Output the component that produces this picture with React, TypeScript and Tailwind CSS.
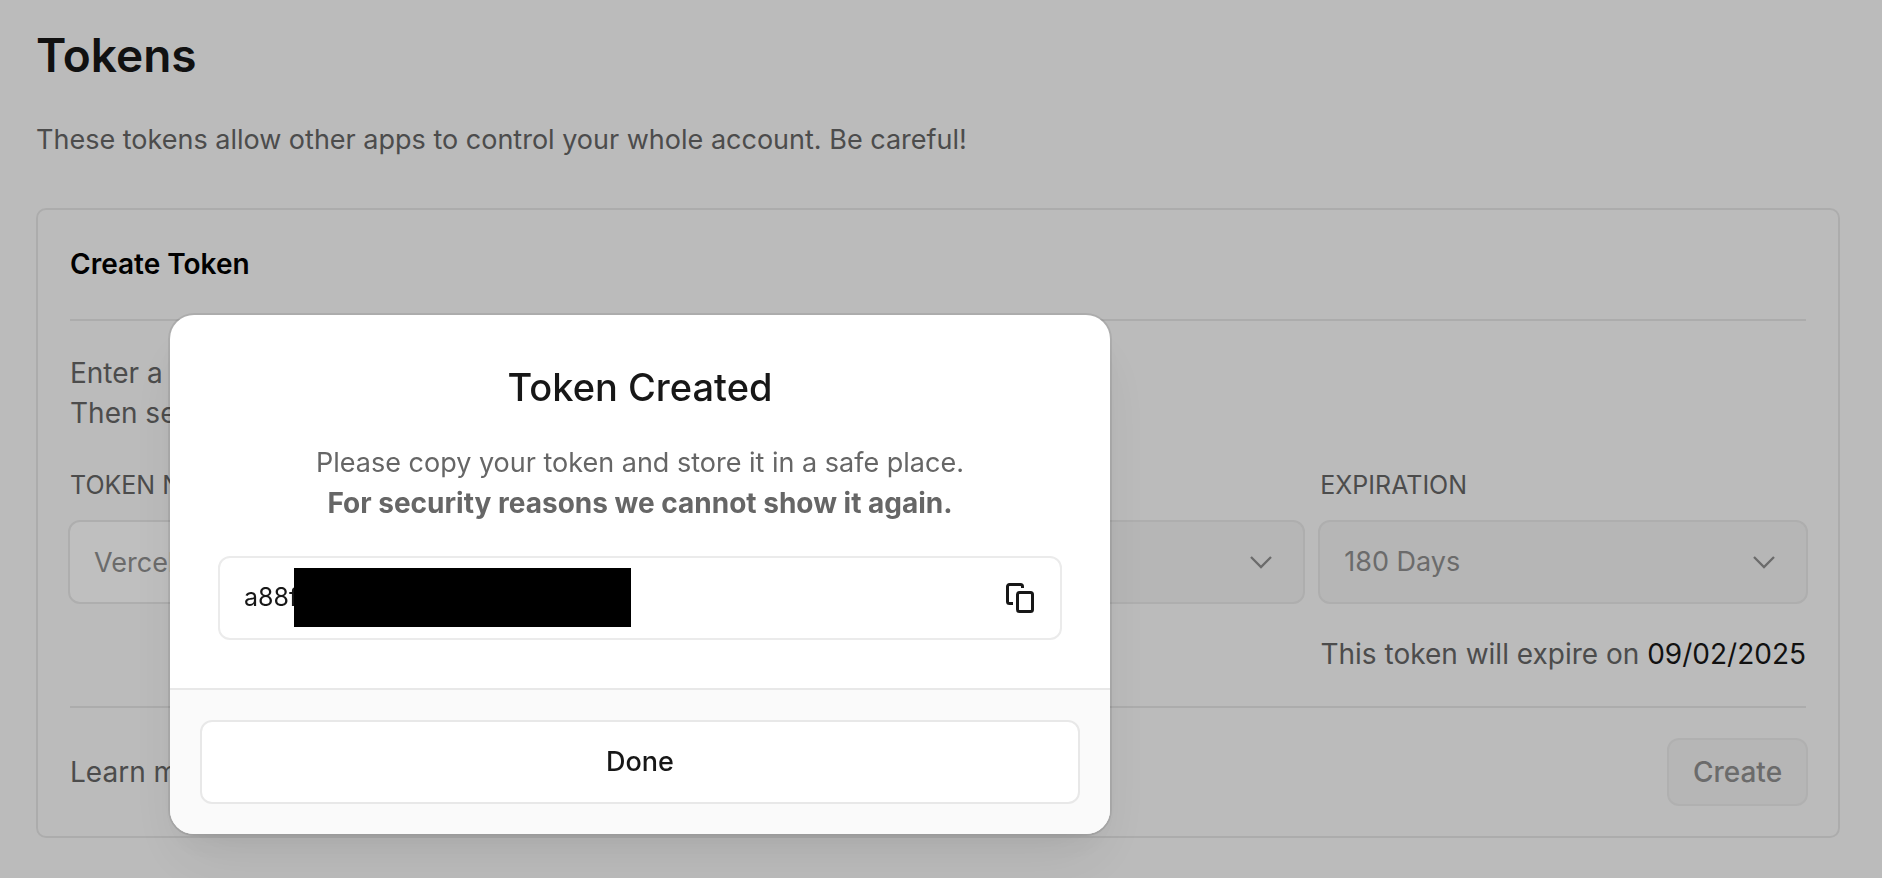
import type { ReactNode } from "react";

function ChevronDown() {
  return (
    <svg
      className="pointer-events-none absolute right-8 top-1/2 -translate-y-1/2"
      width="24"
      height="24"
      viewBox="0 0 24 24"
      fill="none"
      stroke="#8f8f8f"
      strokeWidth="2.3"
      aria-hidden="true"
    >
      <path d="M2 7L12 17L22 7" />
    </svg>
  );
}

function CopyIcon() {
  return (
    <svg width="32" height="32" viewBox="0 0 32 32" fill="none" stroke="#171717" strokeWidth="3" aria-hidden="true">
      <path d="M9 21.500H5.500a2 2 0 0 1-2-2V4.500a2 2 0 0 1 2-2h11a2 2 0 0 1 2 2V6" />
      <rect x="13.500" y="10.500" width="15" height="19" rx="2" />
    </svg>
  );
}

function Field({ id, label, children }: { id: string; label: string; children: ReactNode }) {
  return (
    <div className="flex min-w-0 flex-col gap-[19px]">
      <label htmlFor={id} className="px-0.5 text-[25px] leading-8 text-[#666]">
        {label}
      </label>
      {children}
    </div>
  );
}

function DisabledSelect({ id, value }: { id: string; value: string }) {
  return (
    <div className="relative">
      <select
        id={id}
        disabled
        className="h-[84px] w-full appearance-none rounded-xl border-2 border-[#e8e8e8] bg-[#f3f3f3] px-6 text-[27px] text-[#8f8f8f] opacity-100"
      >
        <option>{value}</option>
      </select>
      <ChevronDown />
    </div>
  );
}

function TokenDialog() {
  return (
    <div className="fixed inset-0 bg-black/25 pl-[170px] pt-[315px]">
      <section
        role="dialog"
        aria-modal="true"
        aria-labelledby="dialog-title"
        className="w-[940px] max-w-full overflow-hidden rounded-3xl bg-white shadow-[0_0_0_2px_rgba(0,0,0,0.08),0_2px_2px_rgba(0,0,0,0.04),0_16px_32px_-8px_rgba(0,0,0,0.05),0_32px_64px_-8px_rgba(0,0,0,0.07)]"
      >
        <div className="p-12">
          <h2 id="dialog-title" className="text-center text-[38px] font-medium leading-[48px] text-[#171717]">
            Token Created
          </h2>
          <p className="mt-8 text-center text-[27px] leading-10 text-[#666]">
            Please copy your token and store it in a safe place.
            <br />
            <strong className="text-[28px] font-bold">For security reasons we cannot show it again.</strong>
          </p>
          <div className="relative mt-8 flex h-[84px] items-center justify-between rounded-xl border-2 border-[#ebebeb] px-6">
            <span className="text-[25px] text-[#171717]">a88f</span>
            <span className="absolute left-[74px] top-[10px] h-[59px] w-[337px] bg-black" />
            <button type="button" aria-label="Copy token">
              <CopyIcon />
            </button>
          </div>
        </div>
        <footer className="border-t-2 border-[#e8e8e8] bg-[#fafafa] p-[30px]">
          <button
            type="button"
            className="h-[84px] w-full rounded-xl border-2 border-[#e8e8e8] bg-white text-[27px] font-medium text-[#171717]"
          >
            Done
          </button>
        </footer>
      </section>
    </div>
  );
}

export default function App() {
  return (
    <div className="min-h-screen bg-[#fafafa] font-['Inter',sans-serif]">
      <main className="pb-10 pl-9 pr-[42px] pt-[27px]">
        <h1 className="text-[46px] font-semibold leading-[56px] text-[#171717]">Tokens</h1>
        <p className="mt-[37px] text-[27px] leading-10 text-[#666]">
          These tokens allow other apps to control your whole account. Be careful!
        </p>

        <form className="mt-12 rounded-[10px] border-2 border-[#e6e6e6] px-8 pb-[30px] pt-[34px]">
          <h2 className="border-b-2 border-[#e6e6e6] pb-[35px] text-[28px] font-semibold leading-10 text-black">
            Create Token
          </h2>
          <p className="mt-8 text-[28px] leading-10 text-[#666]">
            Enter a unique name for your token.
            <br />
            Then select the scope for the token.
          </p>
          <div className="-mx-0.5 mt-9 grid grid-cols-[3fr_2fr_2fr] gap-[13px]">
            <Field id="token-name" label="TOKEN NAME">
              <input
                id="token-name"
                type="text"
                placeholder="Vercel CLI"
                className="h-[84px] w-full rounded-xl border-2 border-[#e8e8e8] bg-white px-6 text-[27px] placeholder:text-[#8f8f8f]"
              />
            </Field>
            <Field id="scope" label="SCOPE">
              <DisabledSelect id="scope" value="Select Scope" />
            </Field>
            <Field id="expiration" label="EXPIRATION">
              <DisabledSelect id="expiration" value="180 Days" />
            </Field>
          </div>
          <p className="mt-[30px] text-right text-[28px] leading-10 text-[#666]">
            This token will expire on <span className="text-[#171717]">09/02/2025</span>
          </p>
          <div className="mt-8 border-t-2 border-[#e6e6e6]" />
          <div className="-mr-0.5 mt-[30px] flex items-center justify-between">
            <p className="text-[28px] leading-10 text-[#666]">Learn more about Tokens</p>
            <button
              type="submit"
              disabled
              className="h-[68px] w-[141px] rounded-xl border-2 border-[#ebebeb] bg-[#f3f3f3] text-[28px] font-medium text-[#8f8f8f]"
            >
              Create
            </button>
          </div>
        </form>
      </main>
      <TokenDialog />
    </div>
  );
}
